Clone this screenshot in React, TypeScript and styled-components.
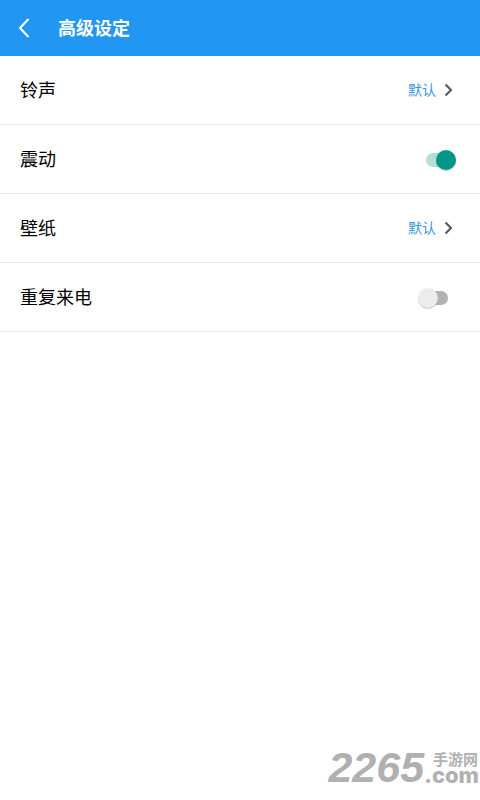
import React, { useState } from "react";
import styled, { createGlobalStyle, css } from "styled-components";

const GlobalStyle = createGlobalStyle`
  * {
    box-sizing: border-box;
  }

  body {
    margin: 0;
    background: #fff;
    color: #000;
    font-family: "Noto Sans CJK SC", sans-serif;
  }

  button {
    border: 0;
    padding: 0;
    background: none;
    color: inherit;
    font: inherit;
    cursor: pointer;
  }
`;

const Screen = styled.div`
  display: flex;
  flex-direction: column;
  min-height: 100vh;
`;

const Header = styled.header`
  display: flex;
  align-items: center;
  height: 56px;
  background: #2196f3;
  color: #fff;
`;

const BackButton = styled.button`
  display: flex;
  align-items: center;
  justify-content: center;
  width: 48px;
  height: 56px;
`;

const Title = styled.h1`
  margin: 0 0 0 10px;
  padding-bottom: 2px;
  font-size: 18px;
  line-height: 28px;
  font-weight: 700;
`;

const List = styled.ul`
  flex: 1;
  margin: 0;
  padding: 0;
  list-style: none;
`;

const Item = styled.li`
  border-bottom: 1px solid #e8e8e8;
`;

const rowLayout = css`
  display: flex;
  align-items: center;
  justify-content: space-between;
  width: 100%;
  height: 68px;
  font-size: 18px;
  line-height: 28px;
  cursor: pointer;
`;

const LinkRow = styled.button`
  && {
    ${rowLayout}
    padding: 0 26px 0 20px;
  }
`;

const SwitchRow = styled.label`
  ${rowLayout}
  padding: 0 22px 0 20px;
`;

const Label = styled.span`
  padding-bottom: 2px;
`;

const Value = styled.span`
  display: flex;
  align-items: center;
  gap: 8px;
  color: #3797e0;
  font-size: 14px;
`;

const Switch = styled.input`
  appearance: none;
  display: flex;
  align-items: center;
  width: 40px;
  height: 20px;
  margin: 1px 0 0;
  padding: 0 8px;
  cursor: pointer;

  &::before {
    content: "";
    width: 22px;
    height: 14px;
    flex: none;
    border-radius: 7px;
    background: #b2b2b2;
  }

  &::after {
    content: "";
    width: 20px;
    height: 20px;
    flex: none;
    margin-left: -30px;
    border-radius: 50%;
    background: #ececec;
    box-shadow: 0 1px 1px rgba(0, 0, 0, 0.22);
  }

  &:checked::before {
    background: #b2dfdb;
  }

  &:checked::after {
    margin-left: -12px;
    background: #009688;
  }
`;

const Footer = styled.footer`
  display: flex;
  justify-content: flex-end;
  align-items: center;
  height: 66px;
  color: #b0b0b0;
`;

const BrandNumber = styled.span`
  font-family: "Liberation Sans", sans-serif;
  font-size: 43px;
  line-height: 44px;
  font-weight: 700;
  font-style: italic;
`;

const BrandSide = styled.span`
  display: flex;
  flex-direction: column;
  align-items: flex-end;
  padding-right: 1px;
`;

const BrandName = styled.span`
  padding-right: 1px;
  font-size: 15px;
  line-height: 16px;
  font-weight: 700;
`;

const BrandDomain = styled.span`
  font-family: Inter, sans-serif;
  font-size: 22px;
  line-height: 16px;
  font-weight: 800;
`;

const BackIcon = () => (
  <svg width="12" height="20" viewBox="0 0 12 20" fill="none" aria-hidden="true">
    <path d="M10.500 1 2 10l8.500 9" stroke="currentColor" strokeWidth="2" />
  </svg>
);

const ChevronIcon = () => (
  <svg width="10" height="14" viewBox="0 0 10 14" fill="none" aria-hidden="true">
    <path d="M1.500 1.500 7 7l-5.500 5.500" stroke="#5c5c5c" strokeWidth="2.200" />
  </svg>
);

const LinkItem = ({ label, value }: { label: string; value: string }) => (
  <Item>
    <LinkRow type="button">
      <Label>{label}</Label>
      <Value>
        <Label>{value}</Label>
        <ChevronIcon />
      </Value>
    </LinkRow>
  </Item>
);

const SwitchItem = ({ label, initial }: { label: string; initial: boolean }) => {
  const [on, setOn] = useState(initial);
  return (
    <Item>
      <SwitchRow>
        <Label>{label}</Label>
        <Switch
          type="checkbox"
          role="switch"
          checked={on}
          onChange={(event) => setOn(event.target.checked)}
        />
      </SwitchRow>
    </Item>
  );
};

export default function App() {
  return (
    <Screen>
      <GlobalStyle />
      <Header>
        <BackButton type="button" aria-label="返回">
          <BackIcon />
        </BackButton>
        <Title>高级设定</Title>
      </Header>
      <List>
        <LinkItem label="铃声" value="默认" />
        <SwitchItem label="震动" initial={true} />
        <LinkItem label="壁纸" value="默认" />
        <SwitchItem label="重复来电" initial={false} />
      </List>
      <Footer>
        <BrandNumber>2265</BrandNumber>
        <BrandSide>
          <BrandName>手游网</BrandName>
          <BrandDomain>.com</BrandDomain>
        </BrandSide>
      </Footer>
    </Screen>
  );
}
